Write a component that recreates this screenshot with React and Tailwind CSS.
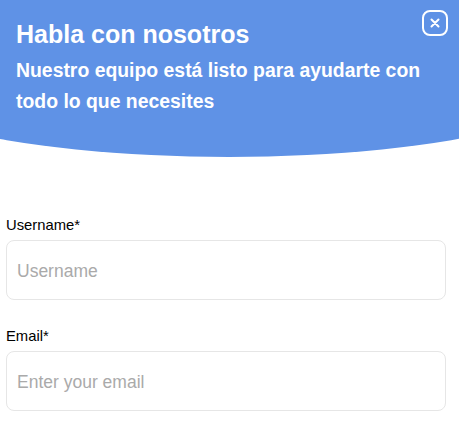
export default function App() {
  return (
    <div className="w-[459px] h-[446px] overflow-hidden bg-white font-['Liberation_Sans',Arial,sans-serif]">
      <header className="relative h-[157px] bg-[#5f92e6] pl-4 pt-[18px] text-white [clip-path:ellipse(400px_100px_at_229px_57px)]">
        <h1 className="text-[25px] leading-8 font-bold">Habla con nosotros</h1>
        <p className="mt-[5px] w-[425px] text-[19.4px] leading-[31px] font-bold">
          Nuestro equipo está listo para ayudarte con todo lo que necesites
        </p>
        <button className="absolute top-[10px] right-[11px] flex h-[26px] w-[26px] items-center justify-center rounded-lg border-2 border-white">
          <svg width="10" height="10" viewBox="0 0 10 10" fill="none" stroke="white" strokeWidth="2" strokeLinecap="round">
            <path d="M1.500 1.500l7 7M8.500 1.500l-7 7" />
          </svg>
        </button>
      </header>
      <form className="flex flex-col gap-[26px] px-[6px] pt-[58px]">
        <label className="block">
          <span className="block text-[14.800px] leading-[20px] text-black">Username*</span>
          <input placeholder="Username" className="mt-[5px] block h-[60px] w-[440px] rounded-lg border border-[#e6e6e6] px-[10px] pt-[2px] text-[17.500px] outline-none placeholder:text-[#aaaaaa]" />
        </label>
        <label className="block">
          <span className="block text-[14.800px] leading-[20px] text-black">Email*</span>
          <input placeholder="Enter your email" className="mt-[5px] block h-[60px] w-[440px] rounded-lg border border-[#e6e6e6] px-[10px] pt-[2px] text-[17.500px] outline-none placeholder:text-[#aaaaaa]" />
        </label>
      </form>
    </div>
  );
}
